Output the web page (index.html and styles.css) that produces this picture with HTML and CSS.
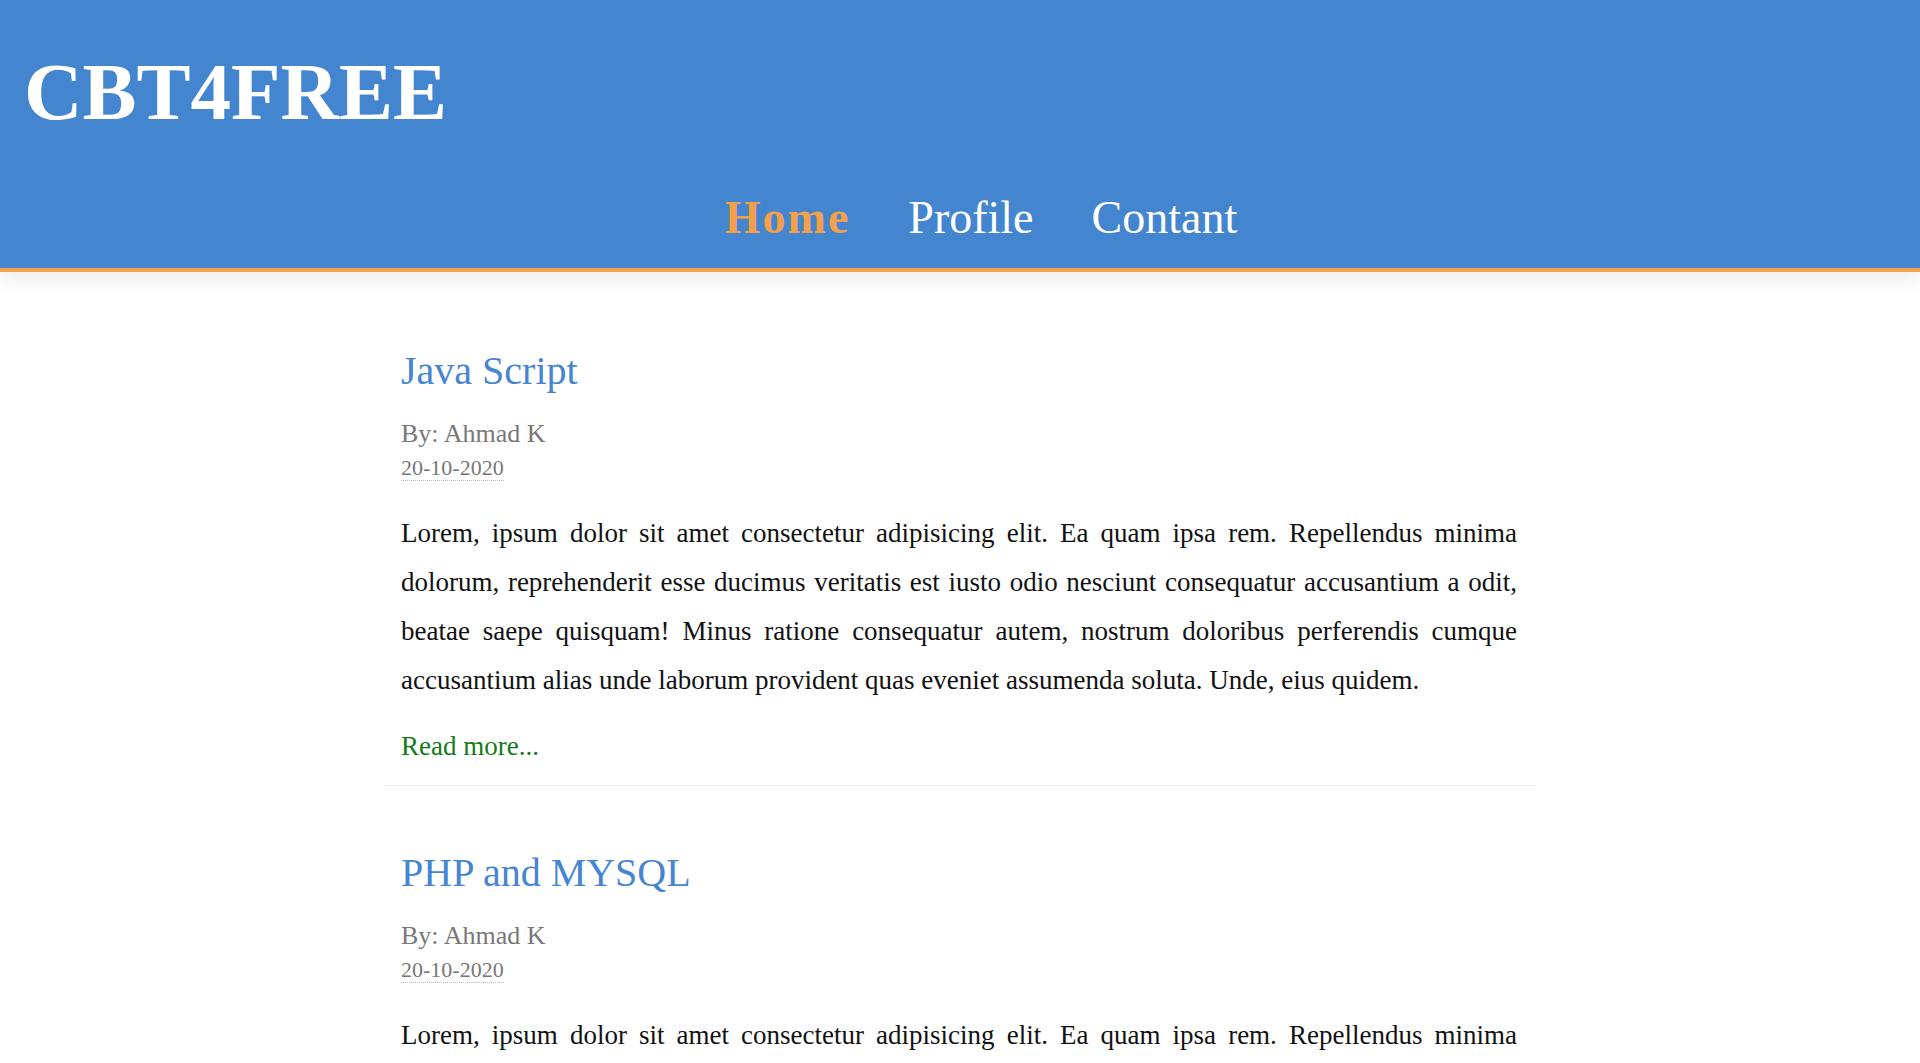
FILE: index.html
```html
<!DOCTYPE html>
<html lang="en">
<head>
<meta charset="utf-8">
<title>CBT4FREE</title>
<link rel="stylesheet" href="styles.css">
</head>
<body>
<header class="site-header">
  <h1 class="logo">CBT4FREE</h1>
  <nav class="nav">
    <a class="nav-link active" href="#">Home</a>
    <a class="nav-link" href="#">Profile</a>
    <a class="nav-link" href="#">Contant</a>
  </nav>
</header>
<main class="posts">
  <article class="post">
    <h2 class="post-title">Java Script</h2>
    <div class="post-author">By: Ahmad K</div>
    <div class="post-date"><time>20-10-2020</time></div>
    <p class="post-body">Lorem, ipsum dolor sit amet consectetur adipisicing elit. Ea quam ipsa rem. Repellendus minima dolorum, reprehenderit esse ducimus veritatis est iusto odio nesciunt consequatur accusantium a odit, beatae saepe quisquam! Minus ratione consequatur autem, nostrum doloribus perferendis cumque accusantium alias unde laborum provident quas eveniet assumenda soluta. Unde, eius quidem.</p>
    <a class="read-more" href="#">Read more...</a>
  </article>
  <article class="post">
    <h2 class="post-title">PHP and MYSQL</h2>
    <div class="post-author">By: Ahmad K</div>
    <div class="post-date"><time>20-10-2020</time></div>
    <p class="post-body">Lorem, ipsum dolor sit amet consectetur adipisicing elit. Ea quam ipsa rem. Repellendus minima dolorum, reprehenderit esse ducimus veritatis est iusto odio nesciunt consequatur accusantium a odit, beatae saepe quisquam! Minus ratione consequatur autem, nostrum doloribus perferendis cumque accusantium alias unde laborum provident quas eveniet assumenda soluta. Unde, eius quidem.</p>
    <a class="read-more" href="#">Read more...</a>
  </article>
</main>
</body>
</html>
```

FILE: styles.css
```css
* {
  box-sizing: border-box;
}

html, body {
  margin: 0;
  padding: 0;
  background: #ffffff;
}

body {
  font-family: "Liberation Serif", "Times New Roman", serif;
  color: #111111;
}

.site-header {
  background: #4485cf;
  border-bottom: 4px solid #f4a24f;
  box-shadow: 0 8px 22px rgba(0, 0, 0, 0.07);
  padding: 52px 0 24px 24px;
  height: 272px;
}

.logo {
  margin: 0;
  font-size: 81px;
  line-height: 80px;
  font-weight: bold;
  color: #ffffff;
}

.nav {
  display: flex;
  justify-content: center;
  gap: 58px;
  margin-top: 60px;
  padding-left: 18px;
}

.nav-link {
  font-size: 46px;
  line-height: 52px;
  color: #ffffff;
  text-decoration: none;
}

.nav-link.active {
  color: #f4a04b;
  font-weight: bold;
  letter-spacing: 2px;
}

.posts {
  width: 60%;
  margin: 0 auto;
  padding-top: 12px;
}

.post {
  padding: 63px 19px 24px 17px;
  border-bottom: 1px solid #eeeeee;
}

.post-title {
  margin: 0;
  font-size: 40px;
  line-height: 48px;
  font-weight: normal;
  color: #4685d2;
}

.post-author {
  margin-top: 24px;
  font-size: 26px;
  line-height: 30px;
  color: #777777;
}

.post-date {
  margin-top: 7px;
  font-size: 22px;
  line-height: 24px;
  color: #777777;
}

.post-date time {
  border-bottom: 1px dotted #bbbbbb;
}

.post-body {
  margin: 29px 0 0 0;
  font-size: 27px;
  line-height: 49px;
  text-align: justify;
  color: #111111;
}

.read-more {
  display: block;
  margin-top: 26px;
  font-size: 27px;
  line-height: 30px;
  color: #137a17;
  text-decoration: none;
}
```
